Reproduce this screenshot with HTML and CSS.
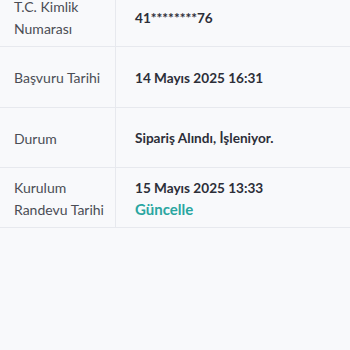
FILE: index.html
```html
<!DOCTYPE html>
<html lang="tr">
<head>
<meta charset="utf-8">
<link rel="stylesheet" href="styles.css">
</head>
<body>
<div class="list">
  <div class="row">
    <div class="label">T.C. Kimlik<br>Numarası</div>
    <div class="value">41********76</div>
  </div>
  <div class="row">
    <div class="label">Başvuru Tarihi</div>
    <div class="value">14 Mayıs 2025 16:31</div>
  </div>
  <div class="row">
    <div class="label">Durum</div>
    <div class="value">Sipariş Alındı, İşleniyor.</div>
  </div>
  <div class="row">
    <div class="label">Kurulum<br>Randevu Tarihi</div>
    <div class="value">15 Mayıs 2025 13:33<br><a class="link">Güncelle</a></div>
  </div>
</div>
</body>
</html>
```
FILE: styles.css
```css
html, body {
  margin: 0;
  background: #f8f9fb;
  font-family: Lato, "Noto Sans", sans-serif;
}
.list {
  margin-top: -13px;
}
.row {
  box-sizing: border-box;
  display: grid;
  grid-template-columns: 116px 1fr;
  height: 60.34px;
  border-bottom: 1px solid #e7e9ee;
}
.label {
  display: flex;
  align-items: center;
  padding: 3px 0 0 14px;
  border-right: 1px solid #e7e9ee;
  font-size: 14px;
  line-height: 22px;
  color: #4a4d55;
}
.value {
  display: flex;
  flex-direction: column;
  justify-content: center;
  padding: 3px 0 0 19px;
  font-size: 13.6px;
  line-height: 21px;
  font-weight: 700;
  color: #2c2e38;
}
.link {
  color: #2aa6a1;
  font-size: 15px;
}
```
